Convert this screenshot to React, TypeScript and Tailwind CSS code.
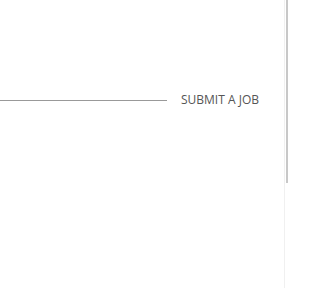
export default function App() {
  return (
    <div className="flex h-[288px] w-[288px] bg-white" style={{ fontFamily: '"Open Sans", sans-serif' }}>
      <div className="flex-1 pt-[92px]">
        <div className="flex items-center">
          <div className="h-px w-[167px] bg-[#999999]" />
          <span className="ml-[14px] text-[12px] leading-[16px] text-[#555555]">SUBMIT A JOB</span>
        </div>
      </div>
      <div className="flex w-[4px] flex-col">
        <div className="h-[183px] border-l border-[#f0f0f0] border-r-2 border-r-[#c8c8c8]" />
        <div className="flex-1 border-l border-[#f0f0f0]" />
      </div>
    </div>
  );
}
